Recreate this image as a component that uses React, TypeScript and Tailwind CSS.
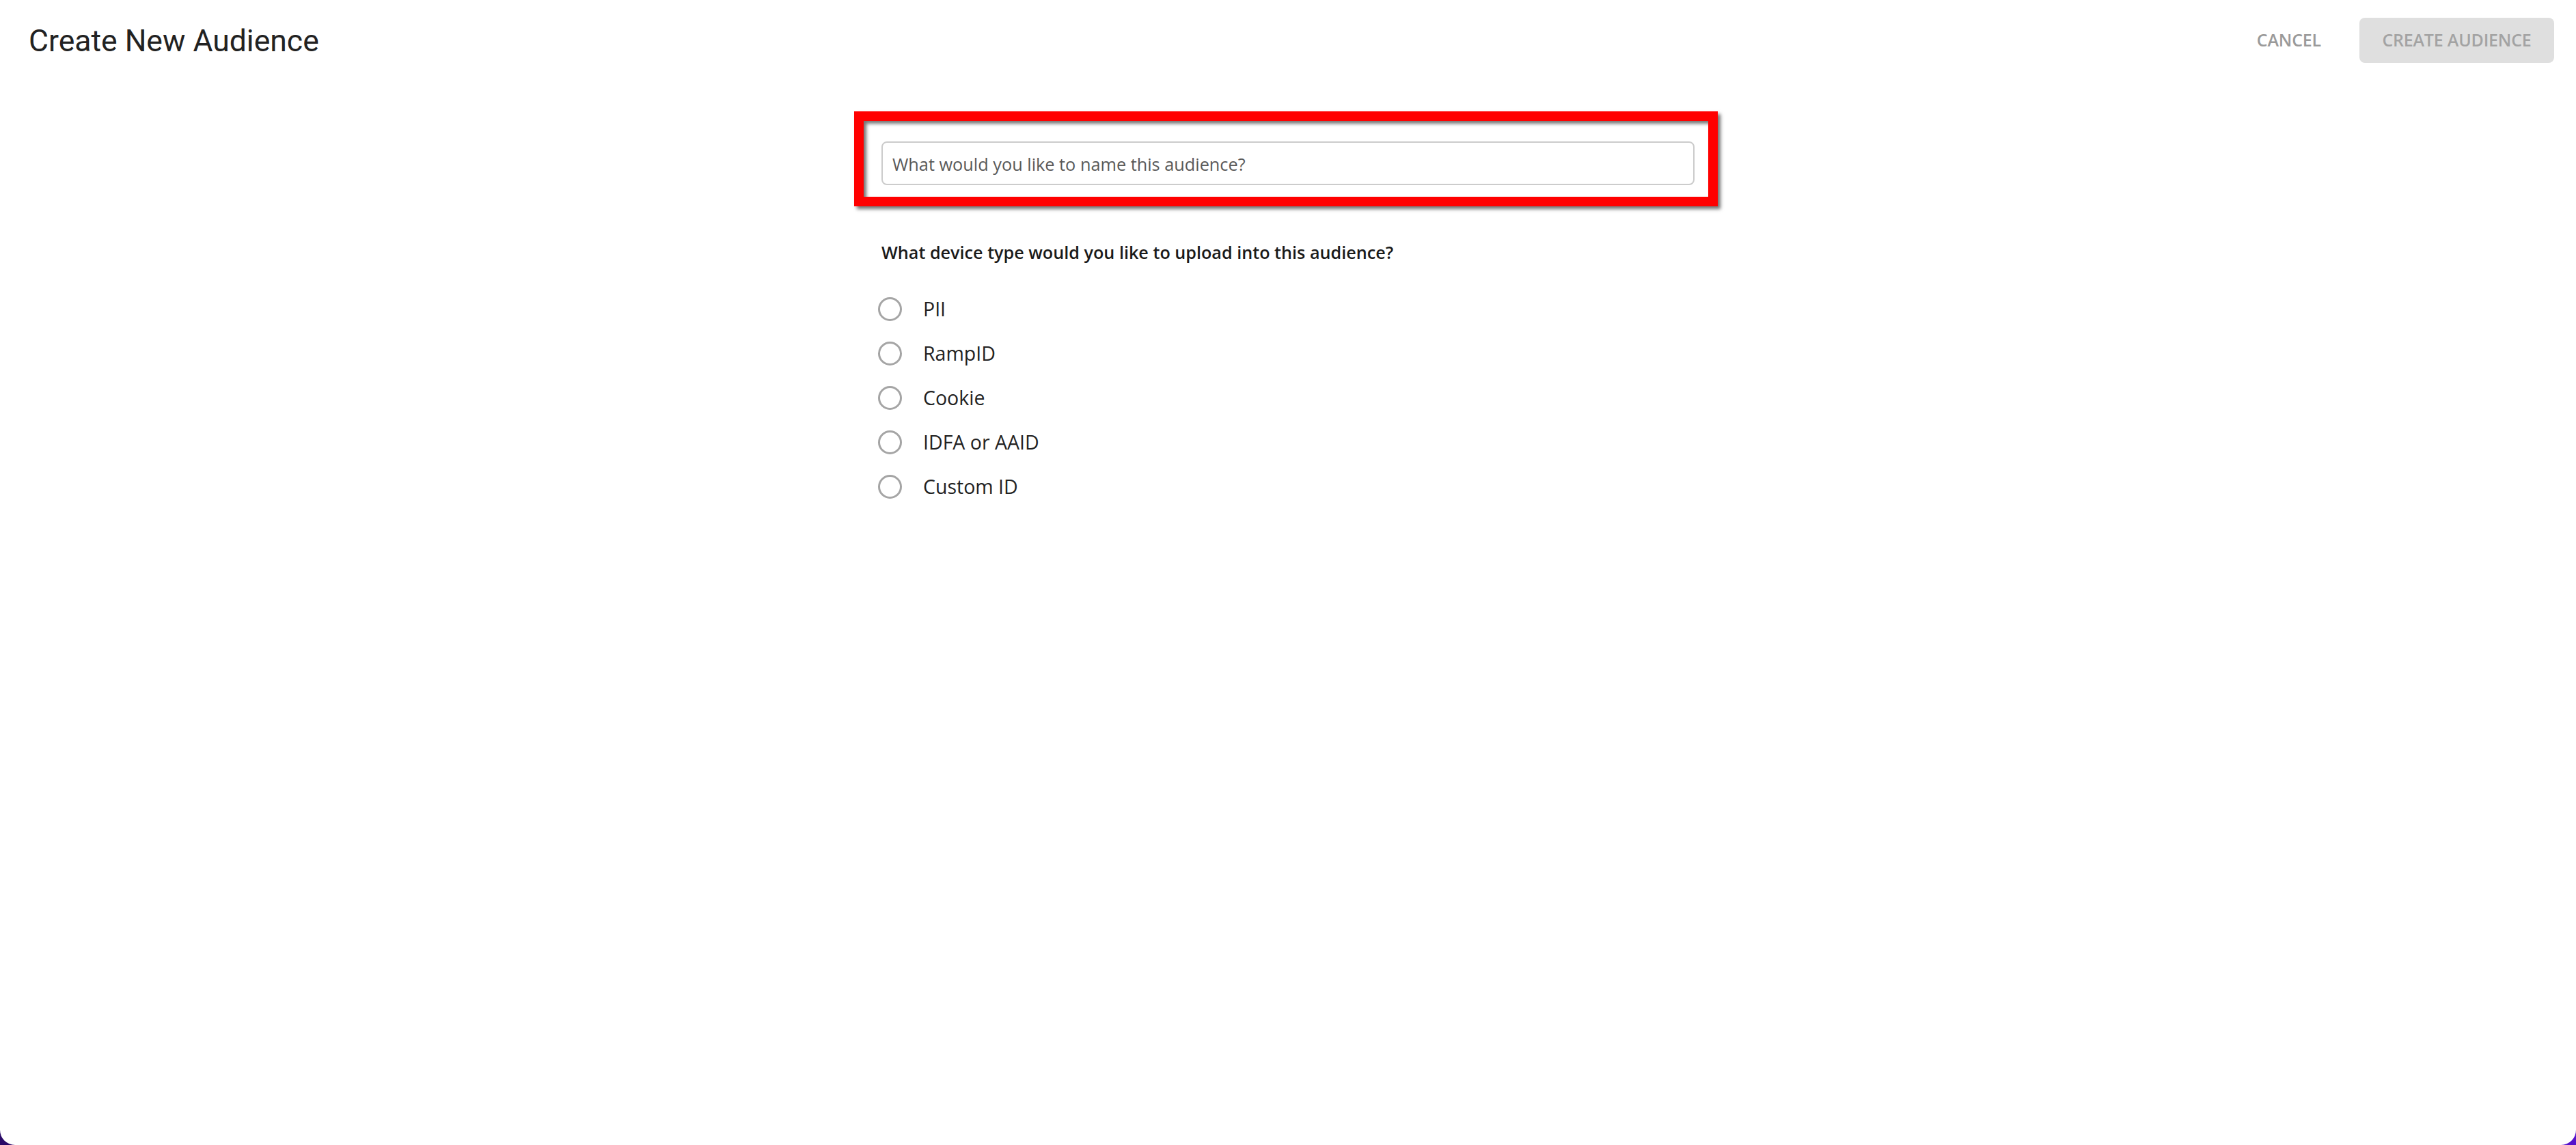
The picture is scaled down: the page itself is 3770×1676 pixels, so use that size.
const options = ["PII", "RampID", "Cookie", "IDFA or AAID", "Custom ID"]

const App = () => {
    return (
        <div className="h-[1676px] w-full bg-gradient-to-r from-[#2a0a68] to-[#5512cc]">
            <div className="h-full w-full bg-white rounded-b-[22px] font-['Open_Sans',sans-serif]">

                {/* Header */}
                <header className="flex items-center justify-between h-[118px] pl-[42px] pr-[32px]">
                    <h1 className="font-['Roboto',sans-serif] text-[44.5px] leading-none text-[#222] pt-[2px]">
                        Create New Audience
                    </h1>
                    <div className="flex items-center gap-[56px]">
                        <button className="text-[25px] font-semibold text-[#9a9a9a] tracking-[-0.2px]">
                            CANCEL
                        </button>
                        <button className="h-[66px] w-[285px] rounded-[8px] bg-[#dfdfdf] text-[25px] font-semibold text-[#a3a3a3] tracking-[-0.2px]">
                            CREATE AUDIENCE
                        </button>
                    </div>
                </header>

                {/* Form */}
                <div className="mx-auto w-[1190px] pt-[45px]">

                    {/* highlighted name field */}
                    <div className="-ml-[40px] -mr-[34px] border-[14px] border-[#ff0000] pl-[26px] pr-[20px] pt-[30px] pb-[17px] shadow-[4px_4px_5px_rgba(0,0,0,0.55),inset_4px_4px_5px_rgba(0,0,0,0.55)]">
                        <input
                            type="text"
                            placeholder="What would you like to name this audience?"
                            className="block h-[64px] w-full rounded-[8px] border-2 border-[#cccccc] bg-white pl-[14px] pt-[2px] text-[25.3px] text-[#333] placeholder:text-[#595959] outline-none"
                        />
                    </div>

                    <p className="mt-[51px] text-[25.2px] leading-[32px] font-semibold text-[#1a1a1a]">
                        What device type would you like to upload into this audience?
                    </p>

                    <ul className="mt-[35px] -ml-[5px]">
                        {options.map((opt) => (
                            <li key={opt} className="flex items-center h-[65px] gap-[31px]">
                                <span className="h-[35px] w-[35px] rounded-full border-[3px] border-[#a5a5a5]" />
                                <span className="text-[28.5px] text-[#222]">{opt}</span>
                            </li>
                        ))}
                    </ul>
                </div>

            </div>
        </div>
    )
}

export default App
